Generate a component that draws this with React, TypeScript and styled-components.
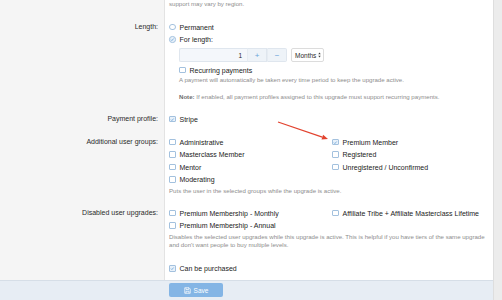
import { type ReactElement, type ReactNode } from "react";
import styled, { createGlobalStyle } from "styled-components";

const GlobalStyle = createGlobalStyle`
  html, body {
    margin: 0;
    padding: 0;
    background: #ececec;
    font-family: "Liberation Sans", Arial, sans-serif;
    color: #2b2b2b;
  }
`;

const Page = styled.div`
  width: 502px;
  height: 300px;
  overflow: hidden;
  background: #ececec;
`;

const Panel = styled.div`
  position: relative;
  width: 494px;
  background: #fff;
  border-right: 1px solid #dedede;
  box-sizing: border-box;
`;

const Row = styled.div<{ $top: number; $bottom: number }>`
  display: grid;
  grid-template-columns: 165px 1fr;

  & > * {
    padding-top: ${p => p.$top}px;
    padding-bottom: ${p => p.$bottom}px;
  }
`;

const Label = styled.div`
  box-sizing: border-box;
  background: #f5f5f5;
  border-right: 1px solid #e3e3e3;
  text-align: right;
  padding-right: 6px;
  font-size: 7px;
  line-height: 12.5px;
`;

const Content = styled.div`
  padding-left: 4px;
  font-size: 7px;
`;

const Hint = styled.div<{ $gap?: number }>`
  font-size: 6.1px;
  line-height: 8.5px;
  color: #8d8d8d;
  margin-top: ${p => p.$gap ?? 0}px;
  white-space: nowrap;

  b {
    color: #6d6d6d;
  }
`;

const Choices = styled.div<{ $rows: number }>`
  display: grid;
  grid-auto-flow: column;
  grid-template-rows: repeat(${p => p.$rows}, 12.5px);
  grid-template-columns: 163px 163px;
`;

const Choice = styled.label`
  display: flex;
  align-items: center;
  gap: 4px;
  height: 12.5px;
  font-size: 7px;
  color: #222;
`;

const Box = styled.span<{ $round?: boolean; $on?: boolean }>`
  box-sizing: border-box;
  width: 6.5px;
  height: 6.5px;
  flex: none;
  display: flex;
  align-items: center;
  justify-content: center;
  border: 1px solid #a3c1de;
  border-radius: ${p => (p.$round ? "50%" : "1px")};
  background: ${p => (p.$on ? "#e8f1fa" : "#fff")};
`;

const Nested = styled.div`
  padding-left: 10px;
`;

const UnitRow = styled.div`
  display: flex;
  align-items: stretch;
  height: 13.5px;
  margin-top: 2.5px;
`;

const NumberBox = styled.div`
  box-sizing: border-box;
  width: 68px;
  background: #f4f7fb;
  border: 1px solid #dfe6ee;
  border-right: none;
  border-radius: 2px 0 0 2px;
  font-size: 6.5px;
  display: flex;
  align-items: center;
  justify-content: flex-end;
  padding-right: 5px;
`;

const StepButton = styled.div<{ $last?: boolean }>`
  box-sizing: border-box;
  width: 20px;
  background: #eef3f8;
  border: 1px solid #dfe6ee;
  border-left-color: #e6ecf2;
  border-radius: ${p => (p.$last ? "0 2px 2px 0" : "0")};
  color: #6aa3d8;
  font-size: 8px;
  display: flex;
  align-items: center;
  justify-content: center;
`;

const Select = styled.div`
  box-sizing: border-box;
  margin-left: 4px;
  width: 33px;
  border: 1px solid #dcdcdc;
  border-radius: 2px;
  background: #fff;
  font-size: 6.5px;
  display: flex;
  align-items: center;
  gap: 2px;
  padding-left: 3px;
`;

const CheckLine = styled.div`
  margin-top: 2px;
`;

const Footer = styled.div`
  height: 20px;
  box-sizing: border-box;
  background: #e7edf4;
  border-top: 1px solid #d6dee7;
  padding: 2px 0 0 169px;
`;

const SaveButton = styled.button`
  width: 54px;
  height: 14px;
  border: none;
  border-radius: 2px;
  background: #84b5e5;
  color: #fff;
  font-family: inherit;
  font-size: 6.5px;
  display: flex;
  align-items: center;
  justify-content: center;
  gap: 3px;
  padding: 0;
`;

const Arrow = styled.svg`
  position: absolute;
  left: 274px;
  top: 118px;
`;

function Tick(): ReactElement {
  return (
    <svg width="5" height="5" viewBox="0 0 10 10">
      <path d="M2 5.2 L4.2 7.4 L8.2 2.8" fill="none" stroke="#5d9ad4" strokeWidth="1.6" />
    </svg>
  );
}

function Option({ children, on, round }: { children: ReactNode; on?: boolean; round?: boolean }): ReactElement {
  return (
    <Choice>
      <Box $on={on} $round={round}>{on && <Tick />}</Box>
      {children}
    </Choice>
  );
}

export default function App(): ReactElement {
  return (
    <Page>
      <GlobalStyle />
      <Panel>
        <Row $top={0} $bottom={8.25}>
          <Label />
          <Content>
            <Hint>support may vary by region.</Hint>
          </Content>
        </Row>

        <Row $top={4} $bottom={7}>
          <Label>Length:</Label>
          <Content>
            <Option round>Permanent</Option>
            <Option round on>For length:</Option>
            <Nested>
              <UnitRow>
                <NumberBox>1</NumberBox>
                <StepButton>+</StepButton>
                <StepButton $last>−</StepButton>
                <Select>
                  Months
                  <svg width="3" height="6" viewBox="0 0 6 12">
                    <path d="M3 1 L5.5 4.5 H0.5 Z M3 11 L5.5 7.5 H0.5 Z" fill="#444" />
                  </svg>
                </Select>
              </UnitRow>
              <CheckLine>
                <Option>Recurring payments</Option>
              </CheckLine>
              <Hint>
                A payment will automatically be taken every time period to keep the upgrade active.
                <br />
                <br />
                <b>Note:</b> If enabled, all payment profiles assigned to this upgrade must support recurring payments.
              </Hint>
            </Nested>
          </Content>
        </Row>

        <Row $top={4} $bottom={6.5}>
          <Label>Payment profile:</Label>
          <Content>
            <Option on>Stripe</Option>
          </Content>
        </Row>

        <Row $top={4} $bottom={7.5}>
          <Label>Additional user groups:</Label>
          <Content>
            <Choices $rows={4}>
              <Option>Administrative</Option>
              <Option>Masterclass Member</Option>
              <Option>Mentor</Option>
              <Option>Moderating</Option>
              <Option on>Premium Member</Option>
              <Option>Registered</Option>
              <Option>Unregistered / Unconfirmed</Option>
            </Choices>
            <Hint $gap={1}>Puts the user in the selected groups while the upgrade is active.</Hint>
          </Content>
        </Row>

        <Row $top={4} $bottom={8.5}>
          <Label>Disabled user upgrades:</Label>
          <Content>
            <Choices $rows={2}>
              <Option>Premium Membership - Monthly</Option>
              <Option>Premium Membership - Annual</Option>
              <Option>Affiliate Tribe + Affiliate Masterclass Lifetime</Option>
            </Choices>
            <Hint $gap={1}>
              Disables the selected user upgrades while this upgrade is active. This is helpful if you have tiers of the same upgrade
              <br />
              and don't want people to buy multiple levels.
            </Hint>
          </Content>
        </Row>

        <Row $top={4} $bottom={5.25}>
          <Label />
          <Content>
            <Option on>Can be purchased</Option>
          </Content>
        </Row>

        <Footer>
          <SaveButton>
            <svg width="7" height="7" viewBox="0 0 14 14">
              <path
                d="M1.5 1.5 H10 L12.5 4 V12.5 H1.5 Z M4 1.5 V5 H9.5 V1.5 M4 12.5 V8.5 H10 V12.5"
                fill="none"
                stroke="#fff"
                strokeWidth="1.4"
              />
            </svg>
            Save
          </SaveButton>
        </Footer>

        <Arrow width="58" height="26" viewBox="0 0 58 26">
          <line x1="4" y1="4" x2="48.3" y2="19.1" stroke="#e2432f" strokeWidth="1.2" />
          <polygon points="54,21 47.5,21.4 49.1,16.7" fill="#e2432f" />
        </Arrow>
      </Panel>
    </Page>
  );
}
